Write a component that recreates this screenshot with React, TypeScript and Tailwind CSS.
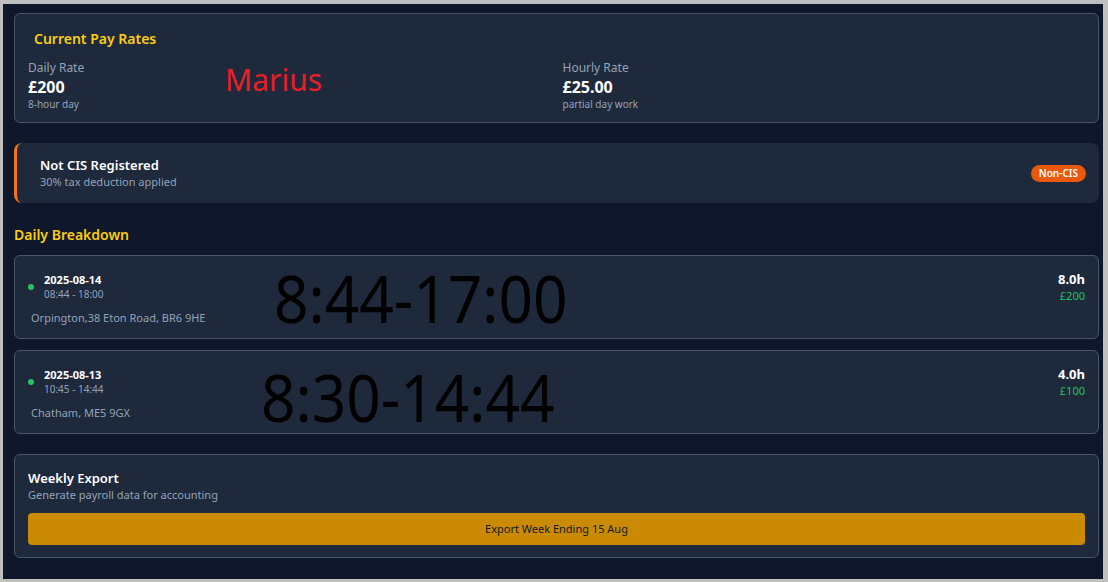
const font = { fontFamily: '"Noto Sans", "Open Sans", sans-serif' };

type Shift = { date: string; time: string; place: string; hours: string; pay: string };

const shifts: Shift[] = [
  { date: "2025-08-14", time: "08:44 - 18:00", place: "Orpington,38 Eton Road, BR6 9HE", hours: "8.0h", pay: "£200" },
  { date: "2025-08-13", time: "10:45 - 14:44", place: "Chatham, ME5 9GX", hours: "4.0h", pay: "£100" },
];

const ShiftCard = ({ s, note, notePos }: { s: Shift; note: string; notePos: string }) => {
  return (
    <div className="relative border border-[#475569] bg-[#1e293b] rounded-md px-[13px] pt-[14px] pb-3">
      <div className="flex items-center justify-between">
        <div className="flex items-center gap-2.5">
          <span className="w-1.5 h-1.5 rounded-full bg-[#22c55e]" />
          <div>
            <p className="text-[11px] leading-[14px] font-bold text-white">{s.date}</p>
            <p className="text-[10px] leading-[14px] text-[#94a3b8]">{s.time}</p>
          </div>
        </div>
        <div className="text-right">
          <p className="text-[13px] leading-[18px] font-bold text-white">{s.hours}</p>
          <p className="text-[11px] leading-4 text-[#22c55e]">{s.pay}</p>
        </div>
      </div>
      <p className="mt-[6px] pl-[3px] text-[11px] leading-4 text-[#94a3b8]">{s.place}</p>
      <span className={`absolute ${notePos} text-[66px] leading-[96px] text-black origin-left scale-x-[0.915] whitespace-nowrap`}>
        {note}
      </span>
    </div>
  );
};

export default function App() {
  return (
    <div className="w-[1108px] h-[582px] bg-[#bfbfbf] pt-[4px] pl-[3px] pr-[5px] pb-[3px]" style={font}>
      <div className="h-full bg-[#0f172a] pl-[11px] pr-[4px] pt-[9px]">
        {/* pay rates */}
        <div className="relative border border-[#475569] bg-[#1e293b] rounded-md px-[13px] pt-[15px] pb-[11px]">
          <h3 className="pl-1.5 text-sm leading-5 font-semibold text-[#facc15]">Current Pay Rates</h3>
          <div className="grid grid-cols-2 gap-3 mt-[11px]">
            <div>
              <p className="text-xs leading-4 text-[#94a3b8]">Daily Rate</p>
              <p className="mt-px text-base leading-5 font-bold text-white">£200</p>
              <p className="text-[10px] leading-[14px] text-[#94a3b8]">8-hour day</p>
            </div>
            <div>
              <p className="text-xs leading-4 text-[#94a3b8]">Hourly Rate</p>
              <p className="mt-px text-base leading-5 font-bold text-white">£25.00</p>
              <p className="text-[10px] leading-[14px] text-[#94a3b8]">partial day work</p>
            </div>
          </div>
          <span className="absolute left-[210px] top-[45px] text-[30px] leading-[42px] text-[#e81f27]">Marius</span>
        </div>

        {/* CIS status */}
        <div className="mt-5 h-[60px] flex items-center justify-between bg-[#1e293b] rounded-lg border-l-[3px] border-[#f97316] pl-[23px] pr-[13px]">
          <div>
            <p className="text-[13px] leading-[18px] font-semibold text-white">Not CIS Registered</p>
            <p className="text-[11px] leading-4 text-[#94a3b8]">30% tax deduction applied</p>
          </div>
          <span className="px-2 h-[17px] flex items-center rounded-full bg-[#ea580c] text-[10px] font-semibold text-white">Non-CIS</span>
        </div>

        <h3 className="mt-[22px] mb-[10px] text-sm leading-5 font-semibold text-[#facc15]">Daily Breakdown</h3>

        <div className="flex flex-col gap-[11px]">
          <ShiftCard s={shifts[0]} note="8:44-17:00" notePos="left-[259px] top-[-7px]" />
          <ShiftCard s={shifts[1]} note="8:30-14:44" notePos="left-[246px] top-[-3px]" />
        </div>

        {/* export */}
        <div className="mt-5 border border-[#475569] bg-[#1e293b] rounded-md px-[13px] pt-[14px] pb-3">
          <p className="text-[13px] leading-[18px] font-semibold text-white">Weekly Export</p>
          <p className="text-[11px] leading-4 text-[#94a3b8]">Generate payroll data for accounting</p>
          <button className="mt-[10px] w-full h-8 rounded bg-[#ca8a04] text-[11px] text-[#111827]">
            Export Week Ending 15 Aug
          </button>
        </div>
      </div>
    </div>
  );
}
